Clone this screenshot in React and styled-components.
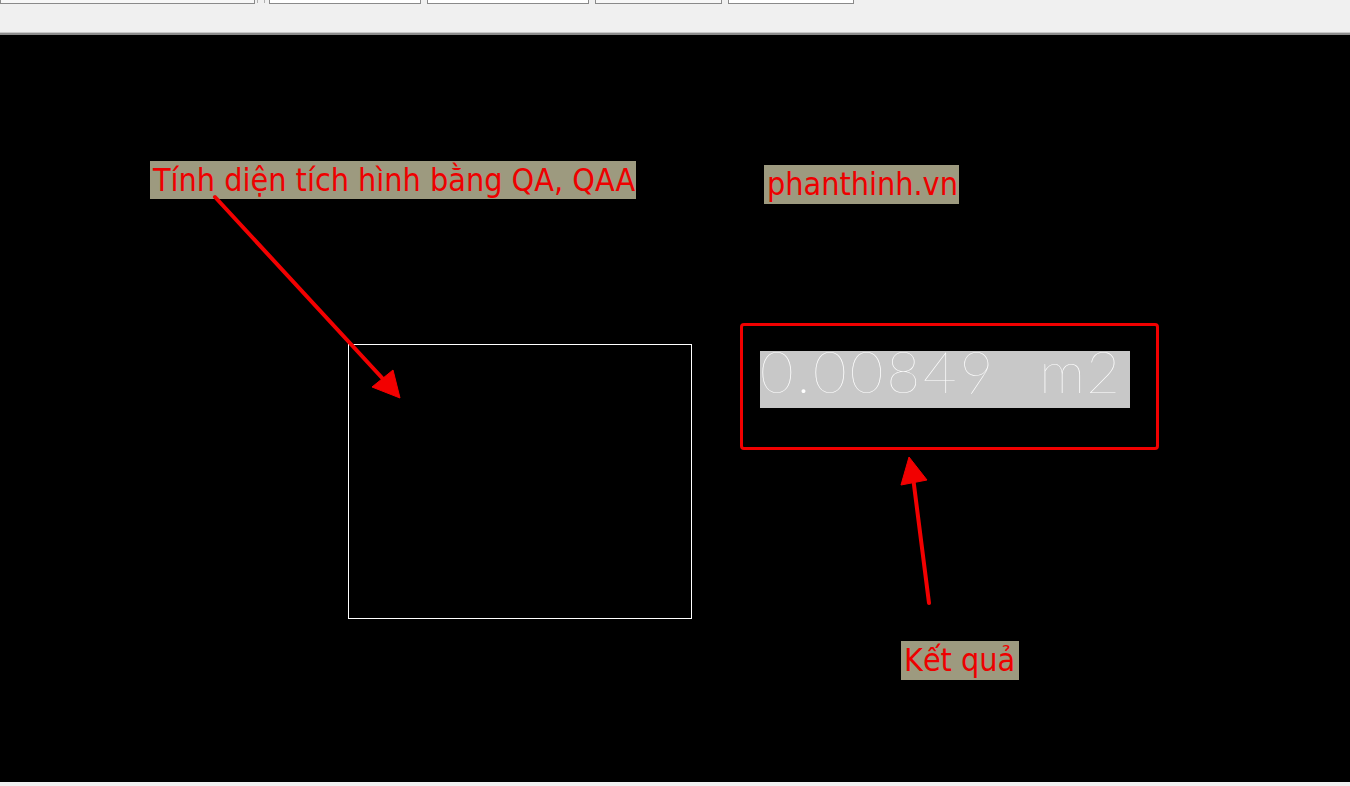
import styled, { createGlobalStyle } from "styled-components";

const GlobalStyle = createGlobalStyle`
  html, body {
    margin: 0;
    padding: 0;
    background: #f0f0f0;
    overflow: hidden;
  }
`;

const Screen = styled.div`
  width: 1350px;
  height: 786px;
  display: flex;
  flex-direction: column;
  background: #f0f0f0;
`;

const Toolbar = styled.div`
  height: 33px;
  display: flex;
  align-items: flex-start;
  border-bottom: 2px solid #8c8c8c;
  box-shadow: inset 0 -1px 0 #c8c8c8;
  flex-shrink: 0;
`;

const Field = styled.div`
  width: ${({ w }) => w}px;
  margin-left: ${({ gap }) => gap || 0}px;
  height: 3px;
  background: ${({ light }) => (light ? "#ffffff" : "#f7f7f7")};
  border: 1px solid #8a8a8a;
  border-top: none;
`;

const Grip = styled.div`
  width: 6px;
  margin-left: ${({ gap }) => gap || 0}px;
  height: 3px;
  border-left: 1px solid #b0b0b0;
  border-right: 1px solid #b0b0b0;
`;

const Canvas = styled.div`
  position: relative;
  flex: 1;
  background: #000;
  overflow: hidden;
`;

const BottomBar = styled.div`
  height: 4px;
  background: #f0f0f0;
  flex-shrink: 0;
`;

const Label = styled.div`
  position: absolute;
  left: ${({ x }) => x}px;
  top: ${({ y }) => y}px;
  width: ${({ w }) => w}px;
  height: ${({ h }) => h}px;
  background: #9d9a7f;
  color: #ee0000;
  font-family: Tahoma, "DejaVu Sans Condensed", "Noto Sans", sans-serif;
  font-size: ${({ size }) => size || 32}px;
  line-height: ${({ h }) => h}px;
  padding-left: 3px;
  box-sizing: border-box;
  white-space: nowrap;
`;

const Shape = styled.div`
  position: absolute;
  left: 348px;
  top: 309px;
  width: 344px;
  height: 275px;
  box-sizing: border-box;
  border: 1px solid #ffffff;
`;

const ResultFrame = styled.div`
  position: absolute;
  left: 740px;
  top: 288px;
  width: 419px;
  height: 127px;
  box-sizing: border-box;
  border: 3px solid #f00000;
  border-radius: 4px;
  padding: 25px 0 0 17px;
`;

const ResultValue = styled.div`
  width: 370px;
  height: 57px;
  background: #c8c8c8;
  color: #ffffff;
  font-family: Lato, "Open Sans", sans-serif;
  font-weight: 100;
  font-size: 58px;
  line-height: 40px;
  letter-spacing: 3px;
  word-spacing: 2px;
  white-space: pre;
`;

const Unit = styled.span`
  letter-spacing: 1px;
`;

const Overlay = styled.svg`
  position: absolute;
  left: 0;
  top: 0;
  width: 1350px;
  height: 747px;
  pointer-events: none;
`;

const Arrow = ({ from, to, head }) => (
  <g fill="#f20000" stroke="#f20000">
    <line x1={from[0]} y1={from[1]} x2={to[0]} y2={to[1]} strokeWidth="4" strokeLinecap="round" />
    <polygon points={head.map((p) => p.join(",")).join(" ")} strokeWidth="1" strokeLinejoin="round" />
  </g>
);

const App = () => {
  return (
    <Screen>
      <GlobalStyle />
      <Toolbar>
        <Field w={253} />
        <Grip gap={2} />
        <Field w={150} gap={4} light />
        <Field w={160} gap={6} light />
        <Field w={125} gap={6} />
        <Field w={124} gap={6} light />
      </Toolbar>
      <Canvas>
        <Shape />
        <Label x={150} y={126} w={486} h={38}>Tính diện tích hình bằng QA, QAA</Label>
        <Label x={764} y={130} w={195} h={39}>phanthinh.vn</Label>
        <Label x={901} y={606} w={118} h={39}>Kết quả</Label>
        <ResultFrame>
          <ResultValue>{"0.00849  "}<Unit>m2</Unit></ResultValue>
        </ResultFrame>
        <Overlay viewBox="0 0 1350 747">
          <Arrow from={[215, 162]} to={[384, 345]} head={[[400, 363], [372, 352], [393, 335]]} />
          <Arrow from={[929, 568]} to={[913, 442]} head={[[909, 422], [901, 450], [927, 445]]} />
        </Overlay>
      </Canvas>
      <BottomBar />
    </Screen>
  );
};

export default App;
